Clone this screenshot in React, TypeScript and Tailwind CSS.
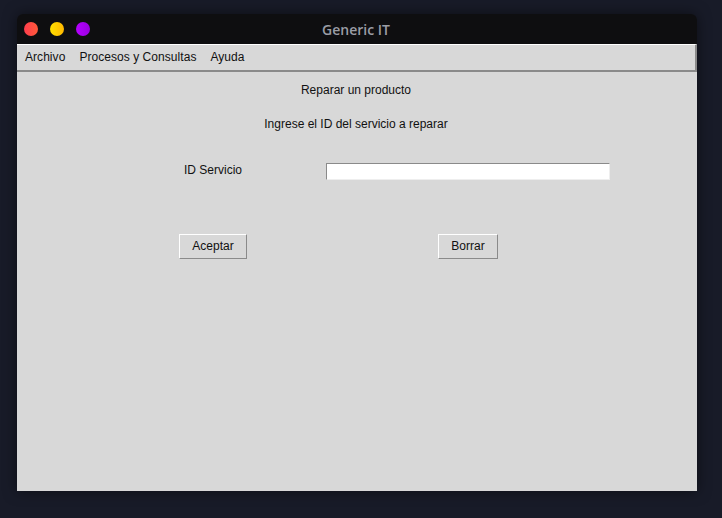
import React from 'react';

const menus = ['Archivo', 'Procesos y Consultas', 'Ayuda'];

function Dot({ from, to }: { from: string; to: string }) {
  return (
    <span
      className="w-[14px] h-[14px] rounded-full"
      style={{ background: `linear-gradient(90deg, ${from}, ${to})` }}
    />
  );
}

function Button({ label, width }: { label: string; width: string }) {
  return (
    <button
      className={`${width} h-[25px] pb-[2px] bg-[#d8d8d8] border border-t-white border-l-white border-b-[#8a8a8a] border-r-[#8a8a8a] text-[12px] text-[#111]`}
    >
      {label}
    </button>
  );
}

export default function App() {
  return (
    <div
      className="w-[722px] h-[518px] bg-[#181b28] pt-[14px] pl-[17px] overflow-hidden"
      style={{ fontFamily: '"Liberation Sans", Arial, sans-serif' }}
    >
      <div className="w-[680px] h-[477px] flex flex-col rounded-t-[6px] overflow-hidden shadow-[0_0_14px_rgba(0,0,0,0.5)]">
        {/* barra de título */}
        <div className="h-[30px] bg-[#0e0e10] relative flex items-center px-[7px] gap-[12px]">
          <Dot from="#ff3d4d" to="#ff5a3a" />
          <Dot from="#ffe000" to="#ffb800" />
          <Dot from="#b400ff" to="#9a00e0" />
          <span
            className="absolute left-0 right-0 text-center text-[14px] font-semibold text-[#9b9da5] pr-[2px]"
            style={{ fontFamily: '"Open Sans", sans-serif' }}
          >
            Generic IT
          </span>
        </div>

        {/* menú */}
        <div className="h-[28px] bg-[#d8d8d8] border-t border-t-white border-b-2 border-b-[#8a8a8a] border-r-2 border-r-[#8a8a8a] flex items-center px-[8px] pb-[2px] gap-[14px] text-[12px] text-[#111] tracking-[0.05px]">
          {menus.map((m) => (
            <span key={m}>{m}</span>
          ))}
        </div>

        {/* contenido */}
        <div className="flex-1 bg-[#d8d8d8] text-[12px] text-[#111] flex flex-col">
          <p className="text-center mt-[11px] leading-[14px] pr-[2px]">Reparar un producto</p>
          <p className="text-center mt-[20px] leading-[14px] pr-[2px]">Ingrese el ID del servicio a reparar</p>

          <div className="flex items-center mt-[32px] pl-[167px]">
            <span className="w-[142px] leading-[14px] -mt-[3px]">ID Servicio</span>
            <input
              className="w-[284px] h-[17px] bg-white border border-t-[#8a8a8a] border-l-[#8a8a8a] border-b-[#eeeeee] border-r-[#eeeeee] outline-none"
              defaultValue=""
            />
          </div>

          <div className="flex mt-[54px] pl-[162px]">
            <Button label="Aceptar" width="w-[68px]" />
            <div className="w-[191px]" />
            <Button label="Borrar" width="w-[60px]" />
          </div>
        </div>
      </div>
    </div>
  );
}
